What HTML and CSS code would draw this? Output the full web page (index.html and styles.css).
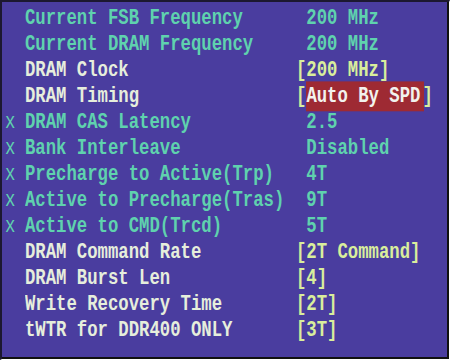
FILE: index.html
```html
<!DOCTYPE html>
<html lang="en">
<head>
    <meta charset="UTF-8">
    <title>Advanced Chipset Features</title>
    <link rel="stylesheet" href="styles.css">
</head>
<body>
    <div class="screen">
        <div class="row info"><span class="mark"></span><span class="label">Current FSB Frequency</span><span class="value"> 200 MHz</span></div>
        <div class="row info"><span class="mark"></span><span class="label">Current DRAM Frequency</span><span class="value"> 200 MHz</span></div>
        <div class="row"><span class="mark"></span><span class="label">DRAM Clock</span><span class="value">[200 MHz]</span></div>
        <div class="row"><span class="mark"></span><span class="label">DRAM Timing</span><span class="value">[<span class="selected">Auto By SPD</span>]</span></div>
        <div class="row info"><span class="mark">x</span><span class="label">DRAM CAS Latency</span><span class="value"> 2.5</span></div>
        <div class="row info"><span class="mark">x</span><span class="label">Bank Interleave</span><span class="value"> Disabled</span></div>
        <div class="row info"><span class="mark">x</span><span class="label">Precharge to Active(Trp)</span><span class="value"> 4T</span></div>
        <div class="row info"><span class="mark">x</span><span class="label">Active to Precharge(Tras)</span><span class="value"> 9T</span></div>
        <div class="row info"><span class="mark">x</span><span class="label">Active to CMD(Trcd)</span><span class="value"> 5T</span></div>
        <div class="row"><span class="mark"></span><span class="label">DRAM Command Rate</span><span class="value">[2T Command]</span></div>
        <div class="row"><span class="mark"></span><span class="label">DRAM Burst Len</span><span class="value">[4]</span></div>
        <div class="row"><span class="mark"></span><span class="label">Write Recovery Time</span><span class="value">[2T]</span></div>
        <div class="row"><span class="mark"></span><span class="label">tWTR for DDR400 ONLY</span><span class="value">[3T]</span></div>
    </div>
</body>
</html>
```
FILE: styles.css
```css
html, body {
    margin: 0;
    padding: 0;
    background: #000;
}
.screen {
    box-sizing: border-box;
    width: 450px;
    height: 360px;
    padding: 4px 0 0 3px;
    background: #4a3d9f;
    border-top: 2px solid #1c1830;
    border-left: 2px solid #1c1830;
    border-right: 1px solid #fff;
    border-bottom: 1px solid #fff;
    box-shadow: inset -2px -2px 0 #111;
    font-family: "Liberation Mono", monospace;
    font-size: 17.3px;
    font-weight: bold;
    overflow: hidden;
}
.row {
    display: grid;
    grid-template-columns: 20px 271px 1fr;
    height: 26px;
    align-items: center;
}
.row > span {
    display: inline-block;
    white-space: pre;
    transform: scaleY(1.3);
    line-height: 20px;
}
.mark {
    color: #5fd2ae;
    font-weight: normal;
}
.label {
    color: #e6eedc;
}
.value {
    color: #d9ee9c;
}
.info .label,
.info .value {
    color: #5fd2ae;
}
.selected {
    color: #f2f2ee;
    background: #9e2a33;
    padding: 2px 4px 2px 0;
    margin-right: -2px;
}
```
